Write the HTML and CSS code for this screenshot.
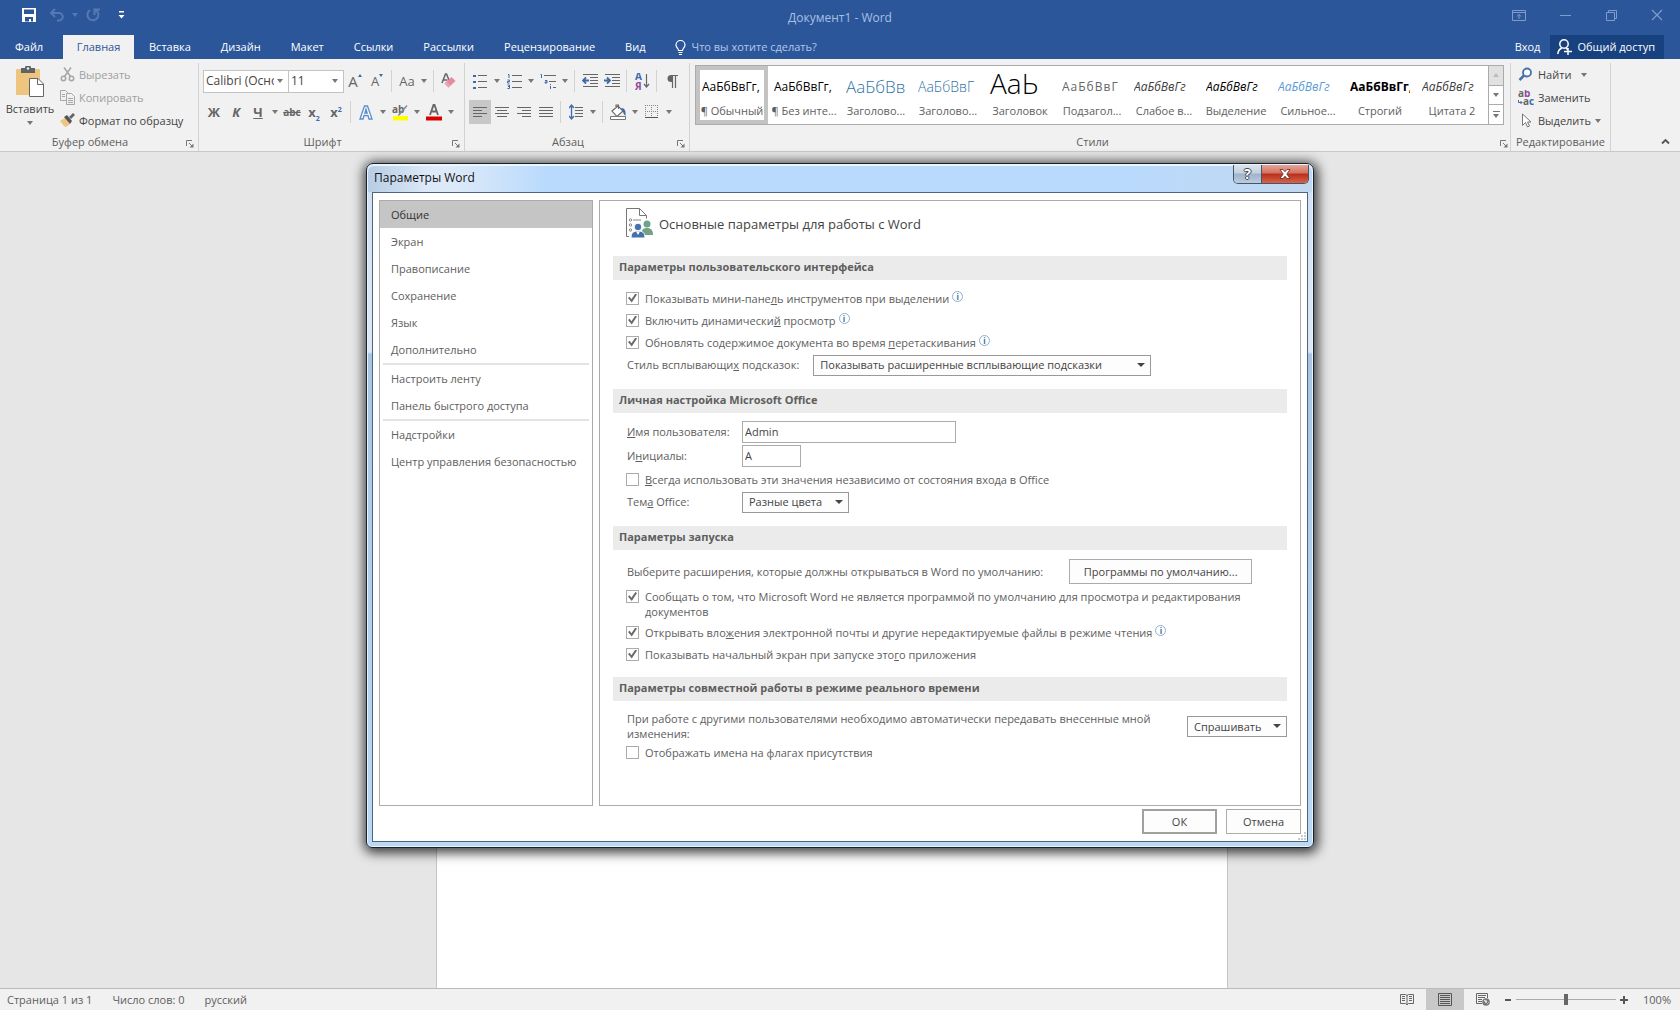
FILE: index.html
```html
<!DOCTYPE html>
<html lang="ru">
<head>
    <title>Документ1 - Word</title>
    <meta charset="utf-8">
    <meta name="viewport" content="width=device-width, initial-scale=1">
    <link rel="stylesheet" href="styles.css">
</head>
<body>
    <header class="titlebar">
        <div class="quick-access">
            <button class="qa-btn" aria-label="Сохранить">
                <svg width="14" height="14" viewBox="0 0 14 14"><path d="M0 0h14v14H0z" fill="#fff"/><path d="M2 1.500h10V6H2zM3 9h8v4.500H9V11H7v2.500H3z" fill="#2b579a"/></svg>
            </button>
            <button class="qa-btn dim" aria-label="Отменить">
                <svg width="16" height="14" viewBox="0 0 16 14"><path d="M6 1L2 5l4 4M2.500 5H10a3.500 3.500 0 0 1 0 7.500H8" fill="none" stroke="currentColor" stroke-width="2"/></svg>
            </button>
            <button class="qa-caret dim" aria-label="Список отмен"><i class="caret"></i></button>
            <button class="qa-btn dim" aria-label="Повторить">
                <svg width="14" height="14" viewBox="0 0 14 14"><path d="M9.500 2A5.500 5.500 0 1 1 4 2.200M8.500 7V1.500H14" fill="none" stroke="currentColor" stroke-width="2"/></svg>
            </button>
            <button class="qa-btn" aria-label="Настройка панели быстрого доступа">
                <svg width="7" height="8" viewBox="0 0 7 8"><path d="M1 0h5v1.500H1zM0.500 4h6l-3 3.500z" fill="#fff"/></svg>
            </button>
        </div>
        <div class="doc-title">Документ1 - Word</div>
        <div class="window-buttons">
            <button aria-label="Параметры отображения ленты"><svg width="14" height="11" viewBox="0 0 14 11"><path d="M.5.5h13v10H.5zM.5 2.500h13M7 9V4.500M5 6.500l2-2 2 2" fill="none" stroke="currentColor"/></svg></button>
            <button aria-label="Свернуть"><svg width="11" height="11" viewBox="0 0 11 11"><path d="M0 5.500h11" stroke="currentColor"/></svg></button>
            <button aria-label="Восстановить"><svg width="11" height="11" viewBox="0 0 11 11"><path d="M.5 2.500h8v8h-8zM2.500 2V.5h8v8H9" fill="none" stroke="currentColor"/></svg></button>
            <button aria-label="Закрыть"><svg width="12" height="12" viewBox="0 0 12 12"><path d="M1 1l10 10M11 1L1 11" fill="none" stroke="currentColor" stroke-width="1.200"/></svg></button>
        </div>
    </header>

    <nav class="tabs">
        <a href="#" class="tab file">Файл</a>
        <a href="#" class="tab active">Главная</a>
        <a href="#" class="tab">Вставка</a>
        <a href="#" class="tab">Дизайн</a>
        <a href="#" class="tab">Макет</a>
        <a href="#" class="tab">Ссылки</a>
        <a href="#" class="tab">Рассылки</a>
        <a href="#" class="tab">Рецензирование</a>
        <a href="#" class="tab">Вид</a>
        <a href="#" class="tell-me">
            <svg width="11" height="15" viewBox="0 0 11 15"><path d="M3.500 10.500c0-2-2.500-2.800-2.500-5.500a4.500 4.500 0 0 1 9 0c0 2.700-2.500 3.500-2.500 5.500zM3.500 12.500h4M4 14.500h3" fill="none" stroke="#fff" stroke-width="1.200"/></svg>
            Что вы хотите сделать?
        </a>
        <a href="#" class="sign-in">Вход</a>
        <button class="share">
            <svg width="15" height="16" viewBox="0 0 15 16"><circle cx="7" cy="5" r="4.200" fill="none" stroke="#fff" stroke-width="1.500"/><path d="M.8 15c.3-3 1.800-5 4-6M9 9l1.500 1.500M7 12.500h8M11 9v7" fill="none" stroke="#fff" stroke-width="1.500"/></svg>
            Общий доступ
        </button>
    </nav>

    <section class="ribbon">
        <div class="group clipboard">
            <div class="group-body">
                <button class="paste">
                    <svg width="30" height="31" viewBox="0 0 30 31"><rect x="1" y="3" width="24" height="26" rx="1" fill="#edc57f"/><path d="M6 2h4a3 3 0 0 1 6 0h4v5H6z" fill="#5f6368"/><circle cx="13" cy="2.500" r="1.200" fill="#f1f1f1"/><path d="M14.500 12.500h8.500l5.500 5.500v12.500h-14z" fill="#fff" stroke="#666"/><path d="M22.500 12.500v6h6" fill="none" stroke="#666"/></svg>
                    <span>Вставить</span>
                    <i class="caret"></i>
                </button>
                <div class="stack">
                    <button class="small disabled">
                        <svg width="15" height="15" viewBox="0 0 15 15"><g fill="none" stroke="#a6a6a6" stroke-width="1.500"><circle cx="3.500" cy="11.500" r="2.200"/><circle cx="11.500" cy="11.500" r="2.200"/><path d="M4.500 9.500L11 .5M10.500 9.500L4 .5"/></g></svg>
                        Вырезать
                    </button>
                    <button class="small disabled">
                        <svg width="15" height="15" viewBox="0 0 15 15"><g fill="#f1f1f1" stroke="#a6a6a6"><path d="M.5.5h5l2 2v8h-7z"/><path d="M6.500 3.500h5l3 3v8h-8z"/><path d="M2 4.500h3M2 6.500h3M8 8.500h5M8 10.500h5M8 12.500h5"/></g></svg>
                        Копировать
                    </button>
                    <button class="small">
                        <svg width="15" height="15" viewBox="0 0 15 15"><path d="M0 8l5-3 5 6-4 3-2-1z" fill="#edc57f"/><path d="M4 4l3-2 5 6-2 3z" fill="#555"/><path d="M9 4l4-4 2 2-4 4z" fill="#666"/></svg>
                        Формат по образцу
                    </button>
                </div>
            </div>
            <div class="group-name">Буфер обмена<button class="launcher" aria-label="Буфер обмена"><svg width="8" height="8" viewBox="0 0 8 8"><path d="M.5 6V.5H6M3 3l3 3" fill="none" stroke="#777"/><path d="M7.500 3.500v4h-4z" fill="#777"/></svg></button></div>
        </div>

        <div class="group font">
            <div class="group-body rows">
                <div class="row">
                    <span class="combo wide"><select aria-label="Шрифт"><option>Calibri (Основной текст)</option></select></span>
                    <span class="combo narrow"><select aria-label="Размер шрифта"><option>11</option></select></span>
                    <button class="tool" aria-label="Увеличить размер"><span class="glyph big">A</span><i class="tri-up"></i></button>
                    <button class="tool" aria-label="Уменьшить размер"><span class="glyph">A</span><i class="tri-down"></i></button>
                    <i class="sep"></i>
                    <button class="tool split" aria-label="Регистр"><span class="glyph">Aa</span><i class="caret"></i></button>
                    <i class="sep"></i>
                    <button class="tool" aria-label="Удалить форматирование"><svg width="16" height="16" viewBox="0 0 16 16"><path d="M1 10L4.500 1h1L8 7M2.500 7h4" fill="none" stroke="#666" stroke-width="1.500"/><path d="M3.500 10.500l7-6.500 4 4-7 6.500z" fill="#e58a9b"/><path d="M5.500 8.500l4 4-2 2-4-4z" fill="#eba5b1"/></svg></button>
                </div>
                <div class="row">
                    <button class="tool" aria-label="Полужирный"><b class="glyph">Ж</b></button>
                    <button class="tool" aria-label="Курсив"><b class="glyph"><em>К</em></b></button>
                    <button class="tool split" aria-label="Подчеркнутый"><b class="glyph"><u>Ч</u></b><i class="caret"></i></button>
                    <button class="tool" aria-label="Зачеркнутый"><b class="glyph abc"><s>abc</s></b></button>
                    <button class="tool" aria-label="Подстрочный"><b class="glyph">x<sub>2</sub></b></button>
                    <button class="tool" aria-label="Надстрочный"><b class="glyph">x<sup>2</sup></b></button>
                    <i class="sep"></i>
                    <button class="tool split" aria-label="Текстовые эффекты"><svg width="14" height="15" viewBox="0 0 14 15"><path d="M1 14L5.500 1h3L13 14h-3l-1-3.500H5L4 14zM5.800 8h2.400L7 4z" fill="#fff" stroke="#5b8ecb" stroke-width="1.300"/></svg><i class="caret"></i></button>
                    <button class="tool split" aria-label="Цвет выделения"><svg width="17" height="17" viewBox="0 0 17 17"><path d="M1 12h15v4.500H1z" fill="#ff0"/><text x="0" y="9" class="icon-text">ab</text><path d="M15.500 2l-5 6-3 3.500-1.500.5.500-2 8-9z" fill="#888"/></svg><i class="caret"></i></button>
                    <button class="tool split" aria-label="Цвет текста"><svg width="17" height="17" viewBox="0 0 17 17"><path d="M0 12.500h16v4H0z" fill="#d90000"/><path d="M4 11L7.500 1h1L12 11M5.500 7.500h5" fill="none" stroke="#666" stroke-width="1.800"/></svg><i class="caret"></i></button>
                </div>
            </div>
            <div class="group-name">Шрифт<button class="launcher" aria-label="Шрифт"><svg width="8" height="8" viewBox="0 0 8 8"><path d="M.5 6V.5H6M3 3l3 3" fill="none" stroke="#777"/><path d="M7.500 3.500v4h-4z" fill="#777"/></svg></button></div>
        </div>

        <div class="group paragraph">
            <div class="group-body rows">
                <div class="row">
                    <button class="tool split" aria-label="Маркеры"><svg width="14" height="15" viewBox="0 0 14 15"><path d="M0 1h3v2H0zM0 7h3v2H0zM0 13h3v2H0z" fill="#3f6aa8"/><path d="M5 1.500h9M5 7.500h9M5 13.500h9" stroke="#666"/></svg><i class="caret"></i></button>
                    <button class="tool split" aria-label="Нумерация"><svg width="15" height="15" viewBox="0 0 15 15"><path d="M1 .5h1V4M.5 6h2v1.500h-2V9h2M.5 11h2v3.500h-2M1 12.500h1.500" fill="none" stroke="#3f6aa8"/><path d="M5 1.500h10M5 7.500h10M5 13.500h10" stroke="#666"/></svg><i class="caret"></i></button>
                    <button class="tool split" aria-label="Многоуровневый список"><svg width="17" height="15" viewBox="0 0 17 15"><path d="M.5.5h1V4M5 6.500h2V9H5V8h2M10.500 10v1M10.500 12v3" fill="none" stroke="#3f6aa8"/><path d="M4 1.500h12M9 7.500h7M13 13.500h3" stroke="#666"/></svg><i class="caret"></i></button>
                    <i class="sep"></i>
                    <button class="tool" aria-label="Уменьшить отступ"><svg width="16" height="14" viewBox="0 0 16 14"><path d="M1 .5h15M8 3.500h8M8 6.500h8M8 9.500h8M1 12.500h15" stroke="#666"/><path d="M7 6.500H1M4 3.500l-3 3 3 3" fill="none" stroke="#3f6aa8" stroke-width="1.800"/></svg></button>
                    <button class="tool" aria-label="Увеличить отступ"><svg width="16" height="14" viewBox="0 0 16 14"><path d="M1 .5h15M8 3.500h8M8 6.500h8M8 9.500h8M1 12.500h15" stroke="#666"/><path d="M0 6.500h6M3 3.500l3 3-3 3" fill="none" stroke="#3f6aa8" stroke-width="1.800"/></svg></button>
                    <i class="sep"></i>
                    <button class="tool" aria-label="Сортировка"><svg width="15" height="17" viewBox="0 0 15 17"><text x="0" y="7" class="icon-text blue">А</text><text x="0" y="17" class="icon-text purple">Я</text><path d="M11.500 1v13M9 11l2.500 3 2.500-3" fill="none" stroke="#666" stroke-width="1.200"/></svg></button>
                    <i class="sep"></i>
                    <button class="tool" aria-label="Отобразить все знаки"><svg width="11" height="13" viewBox="0 0 11 13"><path d="M4 .5h7M5.500 1v12M8.500 1v12" stroke="#666" stroke-width="1.200"/><path d="M5.500 0v7H4a3.500 3.500 0 0 1 0-7z" fill="#666"/></svg></button>
                </div>
                <div class="row">
                    <button class="tool on" aria-label="По левому краю"><svg width="14" height="13" viewBox="0 0 14 13"><path d="M0 1.500h14M0 4.500h9M0 7.500h14M0 10.500h9" stroke="#666"/></svg></button>
                    <button class="tool" aria-label="По центру"><svg width="14" height="13" viewBox="0 0 14 13"><path d="M0 1.500h14M2 4.500h10M0 7.500h14M2 10.500h10" stroke="#666"/></svg></button>
                    <button class="tool" aria-label="По правому краю"><svg width="14" height="13" viewBox="0 0 14 13"><path d="M0 1.500h14M5 4.500h9M0 7.500h14M5 10.500h9" stroke="#666"/></svg></button>
                    <button class="tool" aria-label="По ширине"><svg width="14" height="13" viewBox="0 0 14 13"><path d="M0 1.500h14M0 4.500h14M0 7.500h14M0 10.500h14" stroke="#666"/></svg></button>
                    <i class="sep"></i>
                    <button class="tool split" aria-label="Интервал"><svg width="14" height="16" viewBox="0 0 14 16"><path d="M6 3.500h8M6 6.500h8M6 9.500h8M6 12.500h8" stroke="#666"/><path d="M2.500 1v14M0 4l2.500-3L5 4M0 12l2.500 3L5 12" fill="none" stroke="#3f6aa8" stroke-width="1.300"/></svg><i class="caret"></i></button>
                    <i class="sep"></i>
                    <button class="tool split" aria-label="Заливка"><svg width="17" height="16" viewBox="0 0 17 16"><path d="M2 7l6-5 5 5-6 5.500zM6 4V1h2.500v4" fill="#fff" stroke="#666" stroke-width="1.100"/><path d="M11 4c4 0 5 3 4.500 8-1.500-1-2-3-3-5z" fill="#3f6aa8"/><path d="M.5 12.500h15v3H.5z" fill="#fff" stroke="#777"/></svg><i class="caret"></i></button>
                    <button class="tool split" aria-label="Границы"><svg width="14" height="14" viewBox="0 0 14 14"><path d="M.5 0v14M6.500 0v14M12.500 0v14M0 .5h14M0 6.500h14" stroke="#888" stroke-dasharray="1 1"/><path d="M0 12.500h13" stroke="#555"/></svg><i class="caret"></i></button>
                </div>
            </div>
            <div class="group-name">Абзац<button class="launcher" aria-label="Абзац"><svg width="8" height="8" viewBox="0 0 8 8"><path d="M.5 6V.5H6M3 3l3 3" fill="none" stroke="#777"/><path d="M7.500 3.500v4h-4z" fill="#777"/></svg></button></div>
        </div>

        <div class="group styles">
            <div class="gallery">
                <button class="style selected"><span class="preview">АаБбВвГг,</span><span class="style-name">¶ Обычный</span></button>
                <button class="style"><span class="preview">АаБбВвГг,</span><span class="style-name">¶ Без инте...</span></button>
                <button class="style"><span class="preview heading1">АаБбВв</span><span class="style-name">Заголово...</span></button>
                <button class="style"><span class="preview heading2">АаБбВвГ</span><span class="style-name">Заголово...</span></button>
                <button class="style"><span class="preview title">АаЬ</span><span class="style-name">Заголовок</span></button>
                <button class="style"><span class="preview subtitle">АаБбВвГ</span><span class="style-name">Подзагол...</span></button>
                <button class="style"><span class="preview subtle">АаБбВвГг</span><span class="style-name">Слабое в...</span></button>
                <button class="style"><span class="preview emphasis">АаБбВвГг</span><span class="style-name">Выделение</span></button>
                <button class="style"><span class="preview intense">АаБбВвГг</span><span class="style-name">Сильное...</span></button>
                <button class="style"><span class="preview strong">АаБбВвГг,</span><span class="style-name">Строгий</span></button>
                <button class="style"><span class="preview subtle">АаБбВвГг</span><span class="style-name">Цитата 2</span></button>
                <div class="gallery-scroll">
                    <button disabled aria-label="Вверх"><i class="caret up"></i></button>
                    <button aria-label="Вниз"><i class="caret"></i></button>
                    <button class="more" aria-label="Дополнительно"><i class="caret"></i></button>
                </div>
            </div>
            <div class="group-name">Стили<button class="launcher" aria-label="Стили"><svg width="8" height="8" viewBox="0 0 8 8"><path d="M.5 6V.5H6M3 3l3 3" fill="none" stroke="#777"/><path d="M7.500 3.500v4h-4z" fill="#777"/></svg></button></div>
        </div>

        <div class="group editing">
            <div class="group-body">
                <div class="stack">
                    <button class="small">
                        <svg width="16" height="16" viewBox="0 0 16 16"><circle cx="9" cy="5.500" r="4" fill="#fff" stroke="#4472a8" stroke-width="1.800"/><path d="M6 8.500L1.500 13" stroke="#4472a8" stroke-width="2.500"/></svg>
                        Найти <i class="caret spaced"></i>
                    </button>
                    <button class="small">
                        <svg width="16" height="16" viewBox="0 0 16 16"><text x="0" y="7" class="icon-text">a</text><text x="6" y="7" class="icon-text purple">b</text><text x="5" y="15" class="icon-text">a</text><text x="11" y="15" class="icon-text blue">c</text><path d="M.5 10v2.500H4M2.500 11L4 12.500 2.500 14" fill="none" stroke="#3f6aa8"/></svg>
                        Заменить
                    </button>
                    <button class="small">
                        <svg width="16" height="16" viewBox="0 0 16 16"><path d="M4.500 1v11.500l3-3 2 4.500 2-1-2-4h3.500z" fill="#fff" stroke="#777"/></svg>
                        Выделить<i class="caret"></i>
                    </button>
                </div>
            </div>
            <div class="group-name">Редактирование</div>
        </div>

        <button class="collapse" aria-label="Свернуть ленту"><svg width="9" height="7" viewBox="0 0 9 7"><path d="M1 5.500l3.500-3.500L8 5.500" fill="none" stroke="#555" stroke-width="1.800"/></svg></button>
    </section>

    <main class="workspace">
        <article class="page"></article>

        <div class="dialog" role="dialog" aria-labelledby="dialog-title">
            <div class="dialog-bar">
                <h1 id="dialog-title">Параметры Word</h1>
                <div class="dialog-buttons">
                    <button class="help" aria-label="Справка">?</button>
                    <button class="close" aria-label="Закрыть"><svg width="12" height="10" viewBox="0 0 12 10"><path d="M1 .5h3L6 2.800 8 .5h3L7.800 5 11 9.500H8L6 7.200 4 9.500H1L4.200 5z" fill="#fff" stroke="#5a2a2a" stroke-width=".8"/></svg></button>
                </div>
            </div>

            <div class="dialog-content">
                <div class="panes">
                    <nav class="categories">
                        <a href="#" class="current">Общие</a>
                        <a href="#">Экран</a>
                        <a href="#">Правописание</a>
                        <a href="#">Сохранение</a>
                        <a href="#">Язык</a>
                        <a href="#">Дополнительно</a>
                        <hr>
                        <a href="#">Настроить ленту</a>
                        <a href="#">Панель быстрого доступа</a>
                        <hr>
                        <a href="#">Надстройки</a>
                        <a href="#">Центр управления безопасностью</a>
                    </nav>

                    <div class="options">
                        <div class="options-title">
                            <svg width="28" height="31" viewBox="0 0 28 31"><path d="M3 28.500H.5V.5h13l7 7v3M13.500.5v7h7" fill="none" stroke="#777"/><g fill="none" stroke="#888"><circle cx="4.500" cy="12" r="1.200"/><circle cx="4.500" cy="17" r="1.200"/><circle cx="4.500" cy="22" r="1.200"/><path d="M7 12h8"/></g><circle cx="21" cy="16" r="3.500" fill="#6fa287"/><path d="M15 27c0-6 3-7 6-7s6 1 6 7z" fill="#6fa287"/><circle cx="12" cy="19" r="3.800" fill="#4472a8" stroke="#fff"/><path d="M5 30c0-6 3-7 7-7s7 1 7 7z" fill="#4472a8" stroke="#fff"/><path d="M10 23.500h4L12 27z" fill="#fff"/></svg>
                            <span>Основные параметры для работы с Word</span>
                        </div>

                        <h2>Параметры пользовательского интерфейса</h2>
                        <div class="fields">
                            <label class="check"><input type="checkbox" checked><span>Показывать мини-пане<u>л</u>ь инструментов при выделении</span><i class="info">i</i></label>
                            <label class="check"><input type="checkbox" checked><span>Включить динамически<u>й</u> просмотр</span><i class="info">i</i></label>
                            <label class="check"><input type="checkbox" checked><span>Обновлять содержимое документа во время <u>п</u>еретаскивания</span><i class="info">i</i></label>
                            <div class="field">
                                <label for="tips">Стиль всплывающи<u>х</u> подсказок:</label>
                                <span class="select tips"><select id="tips"><option>Показывать расширенные всплывающие подсказки</option></select></span>
                            </div>
                        </div>

                        <h2>Личная настройка Microsoft Office</h2>
                        <div class="fields">
                            <div class="field aligned">
                                <label for="user"><u>И</u>мя пользователя:</label>
                                <input type="text" id="user" value="Admin">
                            </div>
                            <div class="field aligned">
                                <label for="initials">И<u>н</u>ициалы:</label>
                                <input type="text" id="initials" value="A">
                            </div>
                            <label class="check"><input type="checkbox"><span><u>В</u>сегда использовать эти значения независимо от состояния входа в Office</span></label>
                            <div class="field aligned">
                                <label for="theme">Тем<u>а</u> Office:</label>
                                <span class="select theme"><select id="theme"><option>Разные цвета</option></select></span>
                            </div>
                        </div>

                        <h2>Параметры запуска</h2>
                        <div class="fields">
                            <div class="field tall">
                                <label for="defaults">Выберите расширения, которые должны открываться в Word по умолчанию:</label>
                                <button class="btn defaults" id="defaults">Программы по умолчанию...</button>
                            </div>
                            <label class="check multi"><input type="checkbox" checked><span>Сообщать о том, что Microsoft Word не является программой по умолчанию для просмотра и редактирования документов</span></label>
                            <label class="check"><input type="checkbox" checked><span>Открывать вло<u>ж</u>ения электронной почты и другие нередактируемые файлы в режиме чтения</span><i class="info">i</i></label>
                            <label class="check"><input type="checkbox" checked><span>Показывать начальный экран при запуске это<u>г</u>о приложения</span></label>
                        </div>

                        <h2>Параметры совместной работы в режиме реального времени</h2>
                        <div class="fields">
                            <div class="field share-changes">
                                <label for="ask">При работе с другими пользователями необходимо автоматически передавать внесенные мной изменения:</label>
                                <span class="select ask"><select id="ask"><option>Спрашивать</option></select></span>
                            </div>
                            <label class="check"><input type="checkbox"><span>Отображать имена на флагах присутствия</span></label>
                        </div>
                    </div>
                </div>

                <div class="dialog-footer">
                    <button class="btn primary">ОК</button>
                    <button class="btn">Отмена</button>
                    <svg class="grip" width="8" height="8" viewBox="0 0 8 8"><path d="M6 0h2v2H6zM3 3h2v2H3zM6 3h2v2H6zM0 6h2v2H0zM3 6h2v2H3zM6 6h2v2H6z" fill="#ccc"/></svg>
                </div>
            </div>
        </div>
    </main>

    <footer class="statusbar">
        <span>Страница 1 из 1</span>
        <span>Число слов: 0</span>
        <span>русский</span>
        <div class="view">
            <button aria-label="Режим чтения"><svg width="14" height="13" viewBox="0 0 14 13"><path d="M.5 1.500h5L7 2.500l1.500-1h5v9h-5L7 12l-1.500-1.500h-5zM7 2v10M2 3.500h3M2 5.500h3M2 7.500h3M9 3.500h3M9 5.500h3M9 7.500h3" fill="none" stroke="#666"/></svg></button>
            <button class="on" aria-label="Разметка страницы"><svg width="14" height="13" viewBox="0 0 14 13"><path d="M.5.5h13v12H.5zM2 2.500h10M2 4.500h10M2 6.500h10M2 8.500h10M2 10.500h10" fill="none" stroke="#555"/></svg></button>
            <button aria-label="Веб-документ"><svg width="14" height="13" viewBox="0 0 14 13"><path d="M6 10.500H.5v-10h11V5M2 2.500h8M2 4.500h7M2 6.500h4M2 8.500h4" fill="none" stroke="#666"/><circle cx="10" cy="9" r="3.800" fill="#777"/><path d="M8 7l3 1-1 2zM11 11l2-2" fill="#eee" stroke="#eee" stroke-width=".5"/></svg></button>
            <button class="zoom-btn" aria-label="Уменьшить"><svg width="8" height="8" viewBox="0 0 8 8"><path d="M1 3h6v2H1z" fill="#555"/></svg></button>
            <input type="range" class="zoom" min="10" max="190" value="100" aria-label="Масштаб">
            <button class="zoom-btn" aria-label="Увеличить"><svg width="8" height="8" viewBox="0 0 8 8"><path d="M0 3h3V0h2v3h3v2H5v3H3V5H0z" fill="#555"/></svg></button>
            <span class="percent">100%</span>
        </div>
    </footer>
</body>
</html>
```

FILE: styles.css
```css
:root {
    --blue: #2b579a;
    --text: #444;
    --muted: #5e5e5e;
    --line: #ababab;
}

* {
    margin: 0;
    padding: 0;
    box-sizing: border-box;
}

body {
    height: 100vh;
    display: flex;
    flex-direction: column;
    overflow: hidden;
    background: #e6e6e6;
    color: var(--text);
    font: 11px/16px "Open Sans", "Noto Sans", sans-serif;
}

button,
input,
select {
    font: inherit;
    color: inherit;
    background: none;
    border: none;
}

a {
    color: inherit;
    text-decoration: none;
}

svg {
    display: block;
    flex: none;
}

.caret {
    flex: none;
    border: 3px solid transparent;
    border-top: 4px solid #777;
    border-bottom: 0;
}

.caret.up {
    border-top: 0;
    border-bottom: 4px solid #bbb;
}

/* Title bar */
.titlebar {
    height: 35px;
    display: grid;
    grid-template-columns: 1fr auto 1fr;
    background: var(--blue);
    color: #a9bfe2;
}

.quick-access {
    display: flex;
    align-items: center;
    height: 30px;
    padding-left: 15px;
}

.qa-btn {
    width: 28px;
    display: flex;
    justify-content: center;
}

.qa-caret {
    width: 8px;
    display: flex;
    justify-content: center;
}

.quick-access .dim {
    color: #5779b2;
}

.dim .caret {
    border-top-color: #5779b2;
}

.doc-title {
    padding-top: 10px;
    font-size: 12px;
}

.window-buttons {
    display: flex;
    justify-content: flex-end;
    height: 30px;
    color: #7f9cca;
}

.window-buttons button {
    width: 46px;
    display: flex;
    align-items: center;
    justify-content: center;
}

/* Ribbon tabs */
.tabs {
    height: 24px;
    display: flex;
    background: var(--blue);
    color: #fff;
    line-height: 24px;
    padding-right: 16px;
}

.tab {
    padding: 0 15px;
}

.tab.file {
    width: 63px;
    padding-right: 0;
}

.tab.active {
    width: 71px;
    padding: 0;
    text-align: center;
    background: #f1f1f1;
    color: var(--blue);
}

.tell-me {
    display: flex;
    align-items: center;
    gap: 6px;
    padding-left: 14px;
    color: #b4c7e7;
}

.sign-in {
    margin-left: auto;
    padding-right: 10px;
}

.share {
    display: flex;
    align-items: center;
    gap: 5px;
    padding: 0 9px 0 7px;
    background: #17417f;
}

/* Ribbon */
.ribbon {
    height: 93px;
    flex: none;
    display: flex;
    background: #f1f1f1;
    border-bottom: 1px solid #c8c8c8;
    padding-top: 4px;
}

.group {
    display: flex;
    flex-direction: column;
    flex: none;
    border-right: 1px solid #d2d2d2;
}

.group-body {
    flex: 1;
    display: flex;
}

.group-name {
    height: 18px;
    display: flex;
    justify-content: center;
    align-items: center;
    position: relative;
    color: var(--muted);
}

.launcher {
    position: absolute;
    right: 4px;
    bottom: 3px;
}

.clipboard {
    width: 199px;
}

.clipboard .group-name,
.font .group-name,
.paragraph .group-name {
    padding-right: 18px;
}

.paste {
    width: 60px;
    display: flex;
    flex-direction: column;
    align-items: center;
    padding-top: 3px;
    gap: 4px;
}

.stack {
    display: flex;
    flex-direction: column;
}

.small {
    height: 23px;
    display: flex;
    align-items: center;
    gap: 4px;
}

.small.disabled {
    color: #a0a0a0;
}

.font {
    width: 266px;
}

.paragraph {
    width: 225px;
}

.rows {
    flex-direction: column;
    gap: 7px;
    padding: 6px 4px 0;
}

.row {
    height: 24px;
    display: flex;
    align-items: center;
}

.combo {
    height: 23px;
    border: 1px solid #c3c3c3;
    background: #fff;
    display: flex;
    align-items: center;
    position: relative;
    font-size: 12px;
}

.combo::after,
.select::after {
    content: "";
    position: absolute;
    right: 5px;
    top: 8px;
    border: 3px solid transparent;
    border-top: 4px solid #777;
    border-bottom: 0;
    pointer-events: none;
}

.combo.wide {
    width: 86px;
}

.combo.narrow {
    width: 55px;
    border-left: 0;
}

.combo select,
.select select {
    appearance: none;
    width: 100%;
    height: 100%;
    overflow: hidden;
}

.combo select {
    padding: 0 14px 0 2px;
}

.tool {
    width: 22px;
    height: 24px;
    flex: none;
    display: flex;
    align-items: center;
    justify-content: center;
    position: relative;
    color: #666;
}

.tool.split {
    width: 34px;
    display: grid;
    grid-template-columns: 22px 12px;
    justify-items: center;
}

.tool.on {
    background: #c8c8c8;
}

.glyph {
    font-size: 13px;
}

.glyph.big {
    font-size: 15px;
}

.glyph.abc {
    font-size: 10px;
}

.glyph sub,
.glyph sup {
    font-size: 7px;
    line-height: 0;
    color: #3f6aa8;
}

.tri-up,
.tri-down {
    align-self: flex-start;
    margin-top: 5px;
    border: 2px solid transparent;
}

.tri-up {
    border-top: 0;
    border-bottom: 3px solid #3f6aa8;
}

.tri-down {
    border-bottom: 0;
    border-top: 3px solid #3f6aa8;
}

.sep {
    width: 1px;
    height: 22px;
    margin: 0 4px 0 3px;
    background: #d2d2d2;
}

.icon-text {
    font-size: 10px;
    font-weight: bold;
    fill: #666;
}

.icon-text.blue {
    fill: #3f6aa8;
}

.icon-text.purple {
    fill: #8e4ca0;
}

.styles {
    flex: 1;
    min-width: 0;
    padding: 2px 6px 0 5px;
    justify-content: space-between;
}

.styles .group-name {
    padding-right: 14px;
}

.styles .launcher {
    right: -4px;
}

.gallery {
    height: 60px;
    display: flex;
    background: #fff;
    border: 1px solid var(--line);
}

.style {
    width: 72px;
    flex: none;
    display: flex;
    flex-direction: column;
    align-items: center;
    border: 4px solid transparent;
    border-bottom: 0;
    color: var(--muted);
}

.style.selected {
    border: 4px solid #c3c3c3;
}

.preview {
    width: 60px;
    height: 32px;
    line-height: 34px;
    font-size: 12px;
    overflow: hidden;
    white-space: nowrap;
    text-align: left;
    color: #000;
}

.style-name {
    white-space: nowrap;
    line-height: 18px;
}

.preview.heading1 {
    font-size: 17px;
    font-weight: 300;
    color: #2e74a5;
}

.preview.heading2 {
    font-size: 14px;
    font-weight: 300;
    color: #2e74a5;
}

.preview.title {
    font-size: 28px;
    font-weight: 300;
    line-height: 26px;
}

.preview.subtitle {
    color: #666;
    letter-spacing: 1px;
}

.preview.subtle {
    color: #404040;
    font-style: italic;
}

.preview.emphasis {
    font-style: italic;
}

.preview.intense {
    color: #5b9bd5;
    font-style: italic;
}

.preview.strong {
    font-weight: bold;
}

.gallery-scroll {
    flex: 1;
    display: flex;
    flex-direction: column;
    border-left: 1px solid var(--line);
}

.gallery-scroll button {
    flex: 1;
    display: flex;
    flex-direction: column;
    align-items: center;
    justify-content: center;
}

.gallery-scroll button + button {
    border-top: 1px solid var(--line);
}

.gallery-scroll button:disabled {
    background: #e1e1e1;
}

.gallery-scroll .more::before {
    content: "";
    width: 7px;
    height: 1px;
    margin-bottom: 2px;
    background: #777;
}

.editing {
    width: 100px;
}

.editing .stack {
    padding-left: 7px;
}

.caret.spaced {
    margin-left: 6px;
}

.collapse {
    width: 69px;
    display: flex;
    align-items: flex-end;
    justify-content: flex-end;
    padding: 0 10px 6px 0;
}

/* Document area */
.workspace {
    flex: 1;
    display: flex;
    justify-content: center;
    padding: 30px 17px 0 0;
    position: relative;
}

.page {
    width: 792px;
    background: #fff;
    border: 1px solid #c6c6c6;
    border-bottom: 0;
}

/* Options dialog */
.dialog {
    position: absolute;
    top: 11px;
    left: 0;
    right: 0;
    width: 948px;
    margin: 0 auto;
    padding: 0 5px 5px;
    border: 1px solid #17222f;
    border-radius: 7px 7px 6px 6px;
    background: linear-gradient(#cfe0f3 0, #dce8f5 188px, #a9c5e2 190px, #bcd8f3 100%);
    box-shadow: inset 0 0 0 1px #eaf4fd, 1px 2px 12px 3px rgba(0, 0, 0, 0.75);
}

.dialog-bar {
    height: 27px;
    margin: 1px -4px 0;
    padding: 0 3px 0 6px;
    display: flex;
    justify-content: space-between;
    border-radius: 6px 6px 0 0;
    background: linear-gradient(90deg, #b7cde5 0, #dce9f8 60px, #dbe9f8 90px, #b9dafd 180px, #b9dafd 80%, #c2d8ef 100%);
    box-shadow: inset 0 1px 0 #eef6fd;
}

.dialog-bar h1 {
    font-size: 12px;
    font-weight: normal;
    line-height: 26px;
    color: #111;
}

.dialog-buttons {
    display: flex;
    height: 19px;
    border: 1px solid #45566c;
    border-top: 0;
    border-radius: 0 0 5px 5px;
    overflow: hidden;
}

.dialog-buttons button {
    display: flex;
    align-items: center;
    justify-content: center;
}

.dialog-buttons .help {
    width: 28px;
    font-weight: bold;
    font-size: 14px;
    color: #fff;
    text-shadow: 1px 0 #445, -1px 0 #445, 0 1px #445, 0 -1px #445;
    background: linear-gradient(#dbe4ee 0, #c3d0df 45%, #9fb2c8 50%, #bccddf 100%);
    border-right: 1px solid #45566c;
}

.dialog-buttons .close {
    width: 46px;
    background: linear-gradient(#e5a59a 0, #d5705f 45%, #b82f1a 50%, #d8634a 100%);
}

.dialog-content {
    padding: 7px 6px;
    border: 1px solid #4c6680;
    background: #fff;
}

.panes {
    display: grid;
    grid-template-columns: 214px 1fr;
    gap: 6px;
}

.categories {
    border: 1px solid var(--line);
    color: var(--muted);
}

.categories a {
    display: block;
    padding-left: 11px;
    line-height: 27px;
    white-space: nowrap;
}

.categories .current {
    background: #c5c5c5;
    color: #333;
}

.categories hr {
    height: 2px;
    margin: 0 3px;
    border: 0;
    background: #e3e3e3;
}

.options {
    border: 1px solid var(--line);
    padding: 0 13px 30px;
    color: var(--muted);
}

.options-title {
    height: 55px;
    display: flex;
    align-items: flex-start;
    gap: 5px;
    padding: 7px 0 0 13px;
    font-size: 13px;
    line-height: 32px;
    color: var(--text);
}

.options h2 {
    height: 24px;
    padding-left: 6px;
    font-size: 11px;
    line-height: 22px;
    background: #ebebeb;
}

.fields {
    padding: 7px 0 12px 13px;
}

.check {
    min-height: 22px;
    display: flex;
    align-items: center;
    gap: 6px;
    line-height: 15px;
}

.check input {
    appearance: none;
    flex: none;
    width: 13px;
    height: 13px;
    border: 1px solid var(--line);
    background: #fff;
}

.check input:checked::before {
    content: "";
    display: block;
    width: 9px;
    height: 9px;
    margin: 1px;
    background: #6a6a6a;
    clip-path: polygon(0 50%, 18% 36%, 38% 64%, 82% 0, 100% 10%, 42% 100%);
}

.check.multi {
    align-items: flex-start;
    padding: 3px 0 2px;
}

.check.multi input {
    margin-top: 1px;
}

.info {
    width: 11px;
    height: 11px;
    margin: 0 0 3px -3px;
    border: 1px solid #8fb0cc;
    border-radius: 50%;
    font: bold 8px/9px "Open Sans", sans-serif;
    text-align: center;
    color: #41719c;
}

.field {
    height: 24px;
    display: flex;
    align-items: center;
    gap: 14px;
    padding-left: 1px;
}

.field.aligned {
    display: grid;
    grid-template-columns: 115px auto;
    justify-content: start;
    gap: 0;
}

.field.tall {
    height: 29px;
    gap: 26px;
}

.field input {
    height: 22px;
    padding: 0 2px 2px;
    border: 1px solid var(--line);
    background: #fff;
    color: var(--text);
}

#user {
    width: 214px;
}

#initials {
    width: 59px;
}

.select {
    height: 21px;
    border: 1px solid #999;
    background: #fdfdfd;
    position: relative;
    color: var(--text);
}

.select::after {
    top: 7px;
    border-width: 4px 4px 0;
    border-top-color: #444;
}

.select select {
    padding: 0 16px 0 6px;
}

.select.tips {
    width: 338px;
}

.select.theme {
    width: 107px;
}

.select.ask {
    width: 100px;
    flex: none;
}

.field.share-changes {
    height: 33px;
    line-height: 15px;
    padding-top: 3px;
    justify-content: space-between;
}

.btn {
    width: 75px;
    height: 25px;
    border: 1px solid var(--line);
    background: #fdfdfd;
    color: var(--text);
}

.btn.defaults {
    width: 183px;
}

.btn.primary {
    border: 2px solid #a0a0a0;
}

.dialog-footer {
    display: flex;
    justify-content: flex-end;
    gap: 9px;
    padding-top: 3px;
    position: relative;
}

.grip {
    position: absolute;
    right: -5px;
    bottom: -6px;
}

/* Status bar */
.statusbar {
    height: 22px;
    flex: none;
    display: flex;
    align-items: center;
    gap: 20px;
    padding: 0 9px 0 7px;
    background: #f1f1f1;
    border-top: 1px solid #bbb;
    color: var(--muted);
}

.view {
    height: 100%;
    margin-left: auto;
    display: flex;
    align-items: center;
}

.view button {
    width: 38px;
    height: 100%;
    display: flex;
    align-items: center;
    justify-content: center;
}

.view .on {
    background: #c8c8c8;
}

.view .zoom-btn {
    width: 12px;
}

.zoom {
    appearance: none;
    width: 100px;
    height: 12px;
    margin: 0 2px;
    background: linear-gradient(#aaa, #aaa) center / 100% 1px no-repeat;
}

.zoom::-webkit-slider-thumb {
    appearance: none;
    width: 4px;
    height: 11px;
    background: #666;
}

.percent {
    margin-left: 13px;
}
```
